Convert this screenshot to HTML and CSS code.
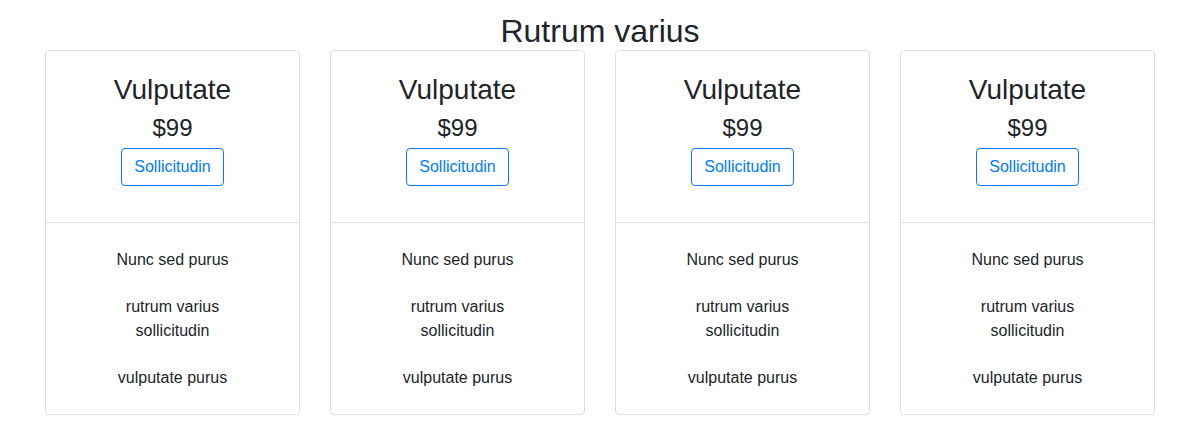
FILE: index.html
```html
<!DOCTYPE html>
<html lang="en">
<head>
<meta charset="utf-8">
<title>Rutrum varius</title>
<link rel="stylesheet" href="styles.css">
</head>
<body>
<div class="container">
  <h1 class="page-title">Rutrum varius</h1>
  <div class="cards">
    <div class="card">
      <div class="card-head">
        <h3 class="plan">Vulputate</h3>
        <div class="price">$99</div>
        <button class="btn">Sollicitudin</button>
      </div>
      <ul class="features">
        <li>Nunc sed purus</li>
        <li>rutrum varius sollicitudin</li>
        <li>vulputate purus</li>
      </ul>
    </div>
    <div class="card">
      <div class="card-head">
        <h3 class="plan">Vulputate</h3>
        <div class="price">$99</div>
        <button class="btn">Sollicitudin</button>
      </div>
      <ul class="features">
        <li>Nunc sed purus</li>
        <li>rutrum varius sollicitudin</li>
        <li>vulputate purus</li>
      </ul>
    </div>
    <div class="card">
      <div class="card-head">
        <h3 class="plan">Vulputate</h3>
        <div class="price">$99</div>
        <button class="btn">Sollicitudin</button>
      </div>
      <ul class="features">
        <li>Nunc sed purus</li>
        <li>rutrum varius sollicitudin</li>
        <li>vulputate purus</li>
      </ul>
    </div>
    <div class="card">
      <div class="card-head">
        <h3 class="plan">Vulputate</h3>
        <div class="price">$99</div>
        <button class="btn">Sollicitudin</button>
      </div>
      <ul class="features">
        <li>Nunc sed purus</li>
        <li>rutrum varius sollicitudin</li>
        <li>vulputate purus</li>
      </ul>
    </div>
  </div>
</div>
</body>
</html>
```

FILE: styles.css
```css
* { box-sizing: border-box; }
html, body {
  margin: 0;
  padding: 0;
  background: #fff;
}
body {
  font-family: "Liberation Sans", Arial, Helvetica, sans-serif;
  font-size: 16px;
  line-height: 24px;
  color: #212529;
}
.container {
  width: 1110px;
  margin: 0 auto;
}
.page-title {
  margin: 12px 0 0;
  font-size: 32px;
  line-height: 38px;
  font-weight: 400;
  text-align: center;
}
.cards {
  display: grid;
  grid-template-columns: repeat(4, 1fr);
  gap: 30px;
}
.card {
  border: 1px solid rgba(0, 0, 0, 0.125);
  border-radius: 4px;
  text-align: center;
  display: flex;
  flex-direction: column;
}
.card-head {
  padding: 22px 20px 36px;
  border-bottom: 1px solid rgba(0, 0, 0, 0.125);
  display: flex;
  flex-direction: column;
  align-items: center;
}
.plan {
  margin: 0;
  font-size: 28px;
  line-height: 34px;
  font-weight: 400;
}
.price {
  margin-top: 6px;
  font-size: 24px;
  line-height: 29px;
}
.btn {
  margin-top: 6px;
  font-family: inherit;
  font-size: 16px;
  line-height: 24px;
  padding: 6px 12px;
  color: #007bff;
  background: transparent;
  border: 1px solid #007bff;
  border-radius: 4px;
}
.features {
  list-style: none;
  margin: 0;
  padding: 25px 52px 24px;
  display: flex;
  flex-direction: column;
  gap: 23px;
}
.features li {
  margin: 0;
}
```
